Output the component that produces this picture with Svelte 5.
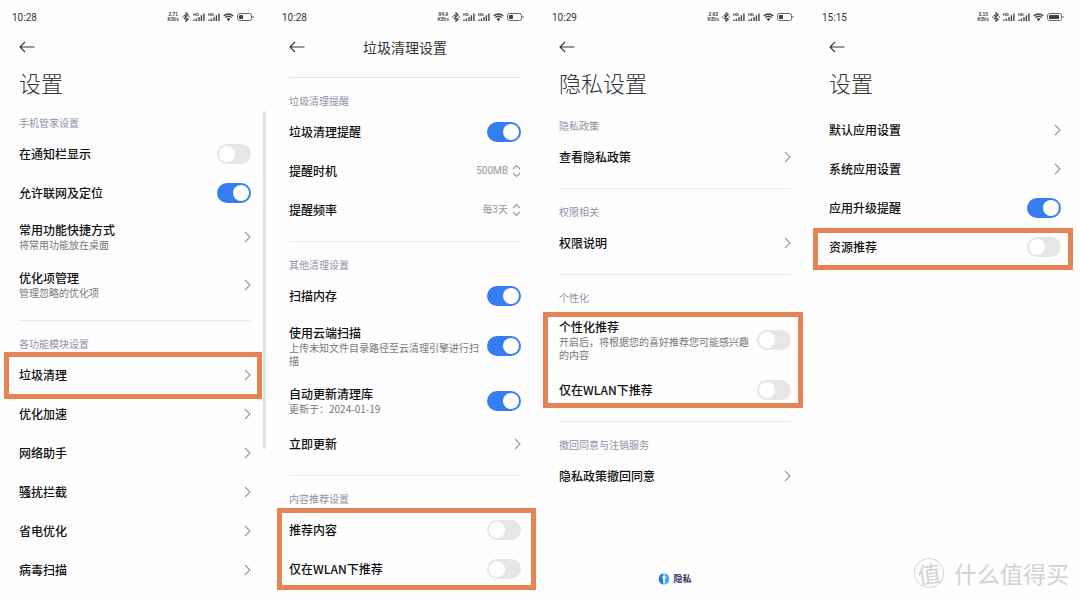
<script lang="ts">
	type Row = {
		title: string;
		sub?: string;
		on?: boolean;
		value?: string;
		options?: string[];
	};

	type Group = { label?: string; rows: Row[]; marked?: Row[]; after?: Row[] };

	type Screen = {
		id: string;
		time: string;
		speed: string;
		battery: number;
		title: string;
		compact?: boolean;
		footer?: string;
		scrolled?: boolean;
		groups: Group[];
	};

	let screens = $state<Screen[]>([
		{
			id: 'manager',
			time: '10:28',
			speed: '2.71',
			battery: 4,
			title: '设置',
			scrolled: true,
			groups: [
				{
					label: '手机管家设置',
					rows: [
						{ title: '在通知栏显示', on: false },
						{ title: '允许联网及定位', on: true },
						{ title: '常用功能快捷方式', sub: '将常用功能放在桌面' },
						{ title: '优化项管理', sub: '管理忽略的优化项' },
					],
				},
				{
					label: '各功能模块设置',
					rows: [],
					marked: [{ title: '垃圾清理' }],
					after: [
						{ title: '优化加速' },
						{ title: '网络助手' },
						{ title: '骚扰拦截' },
						{ title: '省电优化' },
						{ title: '病毒扫描' },
					],
				},
			],
		},
		{
			id: 'cleaner',
			time: '10:28',
			speed: '84.9',
			battery: 4,
			title: '垃圾清理设置',
			compact: true,
			groups: [
				{
					label: '垃圾清理提醒',
					rows: [
						{ title: '垃圾清理提醒', on: true },
						{ title: '提醒时机', value: '500MB', options: ['500MB'] },
						{ title: '提醒频率', value: '每3天', options: ['每3天'] },
					],
				},
				{
					label: '其他清理设置',
					rows: [
						{ title: '扫描内存', on: true },
						{ title: '使用云端扫描', sub: '上传未知文件目录路径至云清理引擎进行扫描', on: true },
						{ title: '自动更新清理库', sub: '更新于：2024-01-19', on: true },
						{ title: '立即更新' },
					],
				},
				{
					label: '内容推荐设置',
					rows: [],
					marked: [
						{ title: '推荐内容', on: false },
						{ title: '仅在WLAN下推荐', on: false },
					],
				},
			],
		},
		{
			id: 'privacy',
			time: '10:29',
			speed: '2.63',
			battery: 4,
			title: '隐私设置',
			footer: '隐私',
			groups: [
				{ label: '隐私政策', rows: [{ title: '查看隐私政策' }] },
				{ label: '权限相关', rows: [{ title: '权限说明' }] },
				{
					label: '个性化',
					rows: [],
					marked: [
						{ title: '个性化推荐', sub: '开启后，将根据您的喜好推荐您可能感兴趣的内容', on: false },
						{ title: '仅在WLAN下推荐', on: false },
					],
				},
				{ label: '撤回同意与注销服务', rows: [{ title: '隐私政策撤回同意' }] },
			],
		},
		{
			id: 'apps',
			time: '15:15',
			speed: '3.15',
			battery: 10,
			title: '设置',
			groups: [
				{
					rows: [
						{ title: '默认应用设置' },
						{ title: '系统应用设置' },
						{ title: '应用升级提醒', on: true },
					],
					marked: [{ title: '资源推荐', on: false }],
				},
			],
		},
	]);
</script>

{#snippet signal()}
	<svg class="signal" viewBox="0 0 12 10" width="12" height="10" aria-hidden="true">
		<text x="0" y="4" font-size="4" font-weight="700" fill="#333">HD</text>
		<path d="M1 9V7.5M3.4 9V6.5M6 9V5M8.4 9V3.2M10.9 9V1.5" stroke="#444" stroke-width="1.4" />
	</svg>
{/snippet}

{#snippet text(row: Row)}
	<span class="text">
		<span class="title">{row.title}</span>
		{#if row.sub}<span class="sub">{row.sub}</span>{/if}
	</span>
{/snippet}

{#snippet item(row: Row)}
	{#if row.on !== undefined}
		<label class="row">
			{@render text(row)}
			<input class="switch" type="checkbox" bind:checked={row.on} />
		</label>
	{:else if row.options}
		<label class="row">
			{@render text(row)}
			<span class="picker">
				<select bind:value={row.value}>
					{#each row.options as option}
						<option>{option}</option>
					{/each}
				</select>
				<svg viewBox="0 0 9 14" width="9" height="14" aria-hidden="true">
					<path d="M1 5l3.5-3.5L8 5M1 9l3.5 3.5L8 9" fill="none" stroke="#999" stroke-width="1.1" />
				</svg>
			</span>
		</label>
	{:else}
		<button class="row" type="button">
			{@render text(row)}
			<svg class="chevron" viewBox="0 0 7 12" width="7" height="12" aria-hidden="true">
				<path d="M1 1l5 5-5 5" fill="none" stroke="#999" stroke-width="1.1" />
			</svg>
		</button>
	{/if}
{/snippet}

<main>
	{#each screens as screen (screen.id)}
		<section class="screen {screen.id}">
			<div class="status">
				<span class="time">{screen.time}</span>
				<span class="speed"><span>{screen.speed}</span><span>KB/s</span></span>
				<svg viewBox="0 0 8 10" width="8" height="10" aria-hidden="true">
					<path d="M1.8 2.8l4.4 4.4L4 9.3V.7l2.2 2.1-4.4 4.4" fill="none" stroke="#444" stroke-width="1.1" />
					<path d="M0 5h1.5M6.5 5H8" stroke="#444" stroke-width="1.2" />
				</svg>
				{@render signal()}
				{@render signal()}
				<svg viewBox="0 0 11 10" width="11" height="10" aria-hidden="true">
					<path d="M.7 4a6.8 6.8 0 0 1 9.6 0M2.3 5.6a4.5 4.5 0 0 1 6.4 0" fill="none" stroke="#444" stroke-width="1.3" />
					<path d="M3.6 7a2.7 2.7 0 0 1 3.8 0L5.5 9.2z" fill="#444" />
				</svg>
				<svg class="battery" viewBox="0 0 17 8" width="17" height="8" aria-hidden="true">
					<rect x=".5" y=".5" width="14" height="7" rx="2" fill="none" stroke="#666" />
					<rect x="2" y="2" width={screen.battery} height="4" rx=".5" fill="#444" />
					<path d="M16 3v2" stroke="#666" stroke-width="1" />
				</svg>
			</div>

			<header class:compact={screen.compact}>
				<button class="back" type="button" aria-label="返回">
					<svg viewBox="0 0 16 12" width="16" height="12" aria-hidden="true">
						<path d="M6 1L1 6l5 5M1 6h14.5" fill="none" stroke="#333" stroke-width="1.1" />
					</svg>
				</button>
				<h1>{screen.title}</h1>
			</header>

			{#each screen.groups as group}
				<div class="group">
					{#if group.label}<h2>{group.label}</h2>{/if}
					{#each group.rows as row}{@render item(row)}{/each}
					{#if group.marked}
						<div class="marked">
							{#each group.marked as row}{@render item(row)}{/each}
						</div>
					{/if}
					{#each group.after ?? [] as row}{@render item(row)}{/each}
				</div>
			{/each}

			{#if screen.scrolled}<div class="scrollbar"></div>{/if}

			{#if screen.footer}
				<footer>
					<svg viewBox="0 0 12 12" width="12" height="12" aria-hidden="true">
						<path d="M5.5.3a5.8 5.8 0 0 0 0 11.4z" fill="#2879e2" />
						<path d="M6.5.3a5.8 5.8 0 0 1 0 11.4z" fill="#35b5ee" />
						<circle cx="6" cy="4.5" r="1.7" fill="#fff" />
						<path d="M6 5v5" stroke="#fff" stroke-width="1.2" />
					</svg>
					<span>{screen.footer}</span>
				</footer>
			{/if}
		</section>
	{/each}

	<div class="watermark">
		<span class="seal">值</span>
		<span>什么值得买</span>
	</div>
</main>

<style>
	:global(body) {
		margin: 0;
		background: #fefefe;
	}

	main {
		position: relative;
		display: grid;
		grid-template-columns: repeat(4, 1fr);
		min-height: 100vh;
		overflow: hidden;
		color: #111;
		font-family: 'Noto Sans CJK SC', sans-serif;
	}

	.screen {
		position: relative;
		display: flex;
		flex-direction: column;
		box-sizing: border-box;
		padding: 0 19px;
	}

	.status {
		display: flex;
		align-items: center;
		gap: 3px;
		height: 34px;
		margin: 0 -3px 0 -7px;
	}

	.time {
		margin-right: auto;
		color: #333;
		font: 10px Roboto, sans-serif;
	}

	.speed {
		display: flex;
		flex-direction: column;
		align-items: center;
		color: #444;
		font: 700 5px/5px 'Liberation Sans', sans-serif;
	}

	.signal { font-family: 'Liberation Sans', sans-serif; }

	.back {
		display: flex;
		align-items: center;
		height: 26px;
		padding: 0;
		border: 0;
		background: none;
	}

	h1 {
		margin: 6px 0 2px;
		color: #333;
		font-size: 22px;
		font-weight: 300;
		line-height: 32px;
	}

	.compact {
		display: grid;
		grid-template-columns: 16px 1fr 16px;
		padding-bottom: 17px;
		border-bottom: 1px solid #e6e6e6;
	}

	.compact h1 {
		margin: 0;
		font-size: 14px;
		font-weight: 400;
		line-height: 26px;
		text-align: center;
	}

	.privacy header { padding-bottom: 3px; }
	.apps header { padding-bottom: 11px; }

	.group + .group {
		margin-top: 11px;
		border-top: 1px solid #ebebeb;
	}

	h2 {
		margin: 15px 0 4px;
		color: #8d93a5;
		font-size: 10px;
		font-weight: 400;
		line-height: 16px;
	}

	.row {
		display: flex;
		align-items: center;
		justify-content: space-between;
		box-sizing: border-box;
		width: 100%;
		min-height: 39px;
		padding: 9px 0 10px;
		border: 0;
		background: none;
		color: inherit;
		font-family: inherit;
		text-align: left;
	}

	.text {
		display: flex;
		flex-direction: column;
		max-width: 192px;
	}

	.title {
		font-size: 12px;
		font-weight: 500;
		line-height: 16px;
	}

	.sub {
		color: #777;
		font-size: 10px;
		line-height: 13px;
	}

	.switch {
		appearance: none;
		flex: none;
		width: 34px;
		height: 20px;
		margin: -5px 0;
		padding: 2px;
		border-radius: 10px;
		background: #e6e6e6;
	}

	.switch::before {
		content: '';
		display: block;
		width: 16px;
		height: 16px;
		border-radius: 50%;
		background: #fff;
	}

	.switch:checked { background: #377df2; }
	.switch:checked::before { margin-left: 14px; }

	.picker {
		display: flex;
		align-items: center;
		gap: 4px;
	}

	select {
		appearance: none;
		width: 60px;
		padding: 0;
		border: 0;
		background: none;
		color: #999;
		font: 10px/16px Roboto, 'Noto Sans CJK SC', sans-serif;
		text-align-last: right;
	}

	.chevron { flex: none; }

	/* orange frame drawn over the rows it calls out */
	.marked { position: relative; }

	.marked::after {
		content: '';
		position: absolute;
		inset: -4px -11px -4px -15px;
		border: 5px solid #e68253;
		pointer-events: none;
	}

	.cleaner .marked::after { inset: -3px -15px -1px -12px; }
	.privacy .marked::after { inset: 2px -12px 2px -16px; }
	.apps .marked::after { inset: 0 -12px -3px -16px; }

	.scrollbar {
		position: absolute;
		top: 111px;
		right: 4px;
		width: 3px;
		height: 338px;
		border-radius: 2px;
		background: #e4e4e4;
	}

	footer {
		display: flex;
		align-items: center;
		justify-content: center;
		gap: 3px;
		margin-top: auto;
		padding-bottom: 13px;
		color: #3b3563;
		font-size: 9px;
		font-weight: 700;
		line-height: 16px;
	}

	.watermark {
		position: absolute;
		right: 11px;
		bottom: 11px;
		display: flex;
		align-items: center;
		gap: 10px;
		color: #d2d2d2;
		font-size: 23px;
		line-height: 32px;
	}

	.seal {
		width: 28px;
		border: 1px solid #d8d8d8;
		border-radius: 50%;
		line-height: 28px;
		text-align: center;
		transform: rotate(-8deg);
	}
</style>
